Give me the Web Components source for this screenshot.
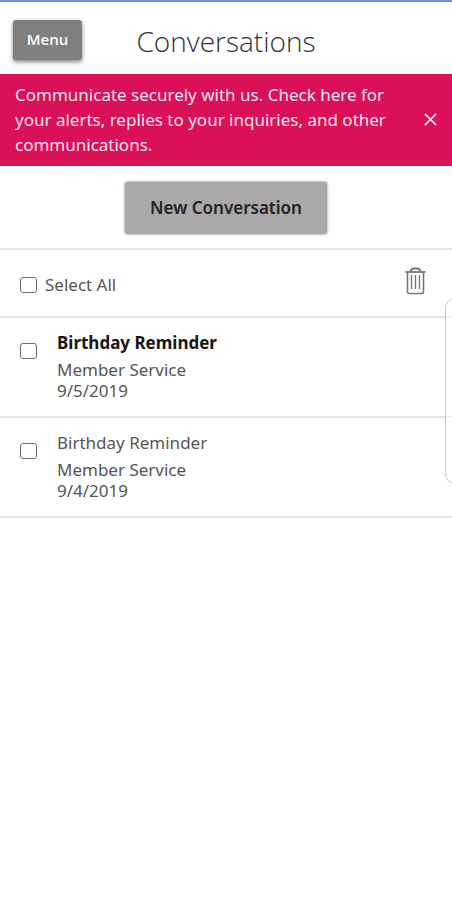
<!DOCTYPE html>
<html lang="en">
<head>
<meta charset="utf-8">
<meta name="viewport" content="width=device-width, initial-scale=1">
<title>Conversations</title>
<style>
body { margin: 0; background: #fff; color: #555; font-family: "Noto Sans", "Open Sans", sans-serif; font-size: 17px; overflow-x: hidden; --line: #e2e2e2; }
</style>
</head>
<body>
<conversations-page></conversations-page>
<script>
const define = (name, html, setup) => customElements.define(name, class extends HTMLElement {
  connectedCallback() {
    if (this.shadowRoot) return;
    this.attachShadow({ mode: 'open' }).innerHTML = html;
    if (setup) setup(this, this.shadowRoot);
  }
});

define('app-header', `
<style>
:host { display: grid; grid-template-columns: 1fr auto 1fr; align-items: center; height: 72px; border-top: 2px solid #7b86dc; background: #fff; }
button { justify-self: start; margin: 4px 0 0 13px; width: 69px; height: 40px; padding: 0 0 2px; border: 0; border-radius: 3px; background: #817e7f; color: #fff; font: 600 15px/20px "Open Sans", sans-serif; box-shadow: 0 2px 4px rgba(0,0,0,.5); }
h1 { margin: 0; padding-top: 6px; font-family: "Open Sans", sans-serif; font-size: 28px; line-height: 40px; font-weight: 300; color: #333; }
</style>
<button type="button">Menu</button><h1><slot></slot></h1>`);

define('info-banner', `
<style>
:host { display: flex; align-items: center; gap: 12px; padding: 8px 12px 9px 15px; background: #da1058; color: #fde3ec; line-height: 25px; }
p { margin: 0; flex: 1; }
button { width: 20px; height: 20px; padding: 0; border: 0; background: none; color: #fde3ec; display: grid; place-items: center; }
</style>
<p><slot></slot></p>
<button type="button" aria-label="Close"><svg width="13" height="13" viewBox="0 0 12 12" fill="none" stroke="currentColor" stroke-width="1.5"><path d="M.8.8l10.4 10.4M11.2.8L.8 11.2"/></svg></button>`);

define('new-action', `
<style>
:host { display: flex; justify-content: center; padding: 16px 0 14px; border-bottom: 2px solid var(--line); }
button { width: 202px; height: 52px; padding: 0; border: 0; border-radius: 2px; background: #aaa8a9; color: #222; font: 600 17px/24px "Noto Sans", "Open Sans", sans-serif; box-shadow: 0 0 3px rgba(0,0,0,.5); }
</style>
<button type="button"><slot></slot></button>`);

const box = `input { appearance: none; flex: none; box-sizing: border-box; width: 17px; height: 16px; margin: 0; border: 1px solid #6b6b6b; border-radius: 3px; background: #fff; }
input:checked { background: #6b6b6b; }`;

define('list-toolbar', `
<style>
:host { display: flex; align-items: center; justify-content: space-between; height: 66px; padding: 0 26px 0 20px; border-bottom: 2px solid var(--line); }
label { display: flex; align-items: center; gap: 8px; line-height: 24px; padding-top: 4px; }
button { width: 21px; height: 28px; margin-bottom: 4px; padding: 0; border: 0; background: none; color: #777; }
svg { display: block; }
${box}
</style>
<label><input type="checkbox"><span>Select All</span></label>
<button type="button" aria-label="Delete"><svg width="21" height="28" viewBox="0 0 21 28" fill="none" stroke="currentColor"><path d="M.5 5h20" stroke-width="1.8"/><path d="M5.500 4.500C6 2.500 7.500 1.500 9 1.500h3c1.500 0 3 1 3.500 3" stroke-width="1.800"/><path d="M2.500 5v19.500q0 2 2 2h12q2 0 2-2V5" stroke-width="1.600"/><path d="M6.500 8v14M10.500 8v14M14.500 8v14" stroke-width="1.400"/></svg></button>`);

define('conversation-item', `
<style>
:host { display: flex; align-items: flex-start; min-height: 98px; border-bottom: 2px solid var(--line); }
label { display: flex; flex: 1; align-items: flex-start; gap: 20px; padding: 12px 20px 0; }
.text { display: grid; line-height: 21px; }
.subject { line-height: 26px; margin-bottom: 3px; }
:host([unread]) .subject { font-weight: 700; color: #151515; }
${box}
label input { margin-top: 13px; }
</style>
<label><input type="checkbox"><span class="text"><span class="subject"><slot name="subject"></slot></span><slot name="from"></slot><slot name="date"></slot></span></label>`);

define('side-drawer', `
<style>
:host { position: fixed; top: 298px; left: calc(100% - 7px); width: 30px; height: 184px; border: 1px solid #c9c9c9; border-radius: 10px; background: rgba(255,255,255,.55); }
</style>`);

define('conversations-page', `
<style>:host { display: block; }</style>
<app-header>Conversations</app-header>
<info-banner>Communicate securely with us. Check here for your alerts, replies to your inquiries, and other communications.</info-banner>
<new-action>New Conversation</new-action>
<list-toolbar></list-toolbar>
<conversation-item unread><span slot="subject">Birthday Reminder</span><span slot="from">Member Service</span><span slot="date">9/5/2019</span></conversation-item>
<conversation-item><span slot="subject">Birthday Reminder</span><span slot="from">Member Service</span><span slot="date">9/4/2019</span></conversation-item>
<side-drawer></side-drawer>`, (host, root) => {
  const toolbar = root.querySelector('list-toolbar').shadowRoot;
  toolbar.querySelector('input').addEventListener('change', e => {
    root.querySelectorAll('conversation-item').forEach(i => i.shadowRoot.querySelector('input').checked = e.target.checked);
  });
  const banner = root.querySelector('info-banner');
  banner.shadowRoot.querySelector('button').addEventListener('click', () => banner.remove());
});
</script>
</body>
</html>
